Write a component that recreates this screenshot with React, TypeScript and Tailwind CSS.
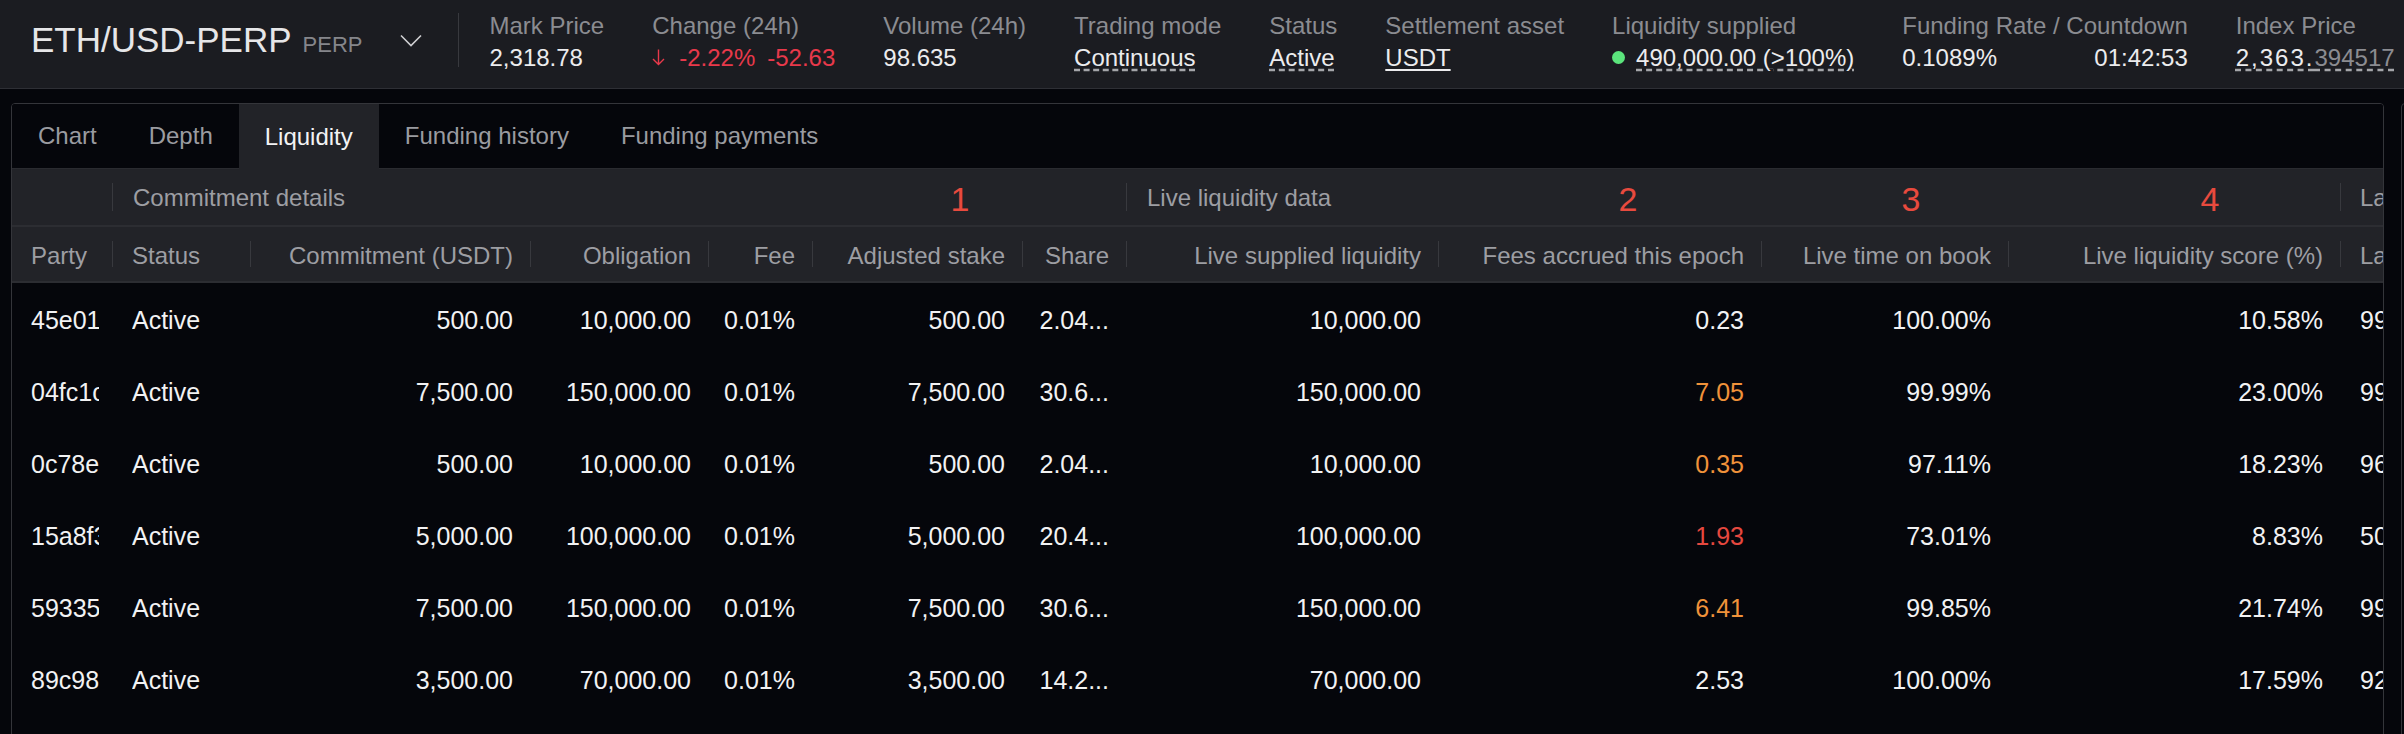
import clsx from "clsx";

type Tone = "white" | "orange" | "red";

type Row = {
  party: string;
  commitment: string;
  obligation: string;
  stake: string;
  share: string;
  supplied: string;
  fees: string;
  tone: Tone;
  time: string;
  score: string;
  last: string;
};

const rows: Row[] = [
  { party: "45e01b7c2a", commitment: "500.00", obligation: "10,000.00", stake: "500.00", share: "2.04...", supplied: "10,000.00", fees: "0.23", tone: "white", time: "100.00%", score: "10.58%", last: "99.12%" },
  { party: "04fc1c9e3d", commitment: "7,500.00", obligation: "150,000.00", stake: "7,500.00", share: "30.6...", supplied: "150,000.00", fees: "7.05", tone: "orange", time: "99.99%", score: "23.00%", last: "99.98%" },
  { party: "0c78e5a1f0", commitment: "500.00", obligation: "10,000.00", stake: "500.00", share: "2.04...", supplied: "10,000.00", fees: "0.35", tone: "orange", time: "97.11%", score: "18.23%", last: "96.40%" },
  { party: "15a8f3b6c1", commitment: "5,000.00", obligation: "100,000.00", stake: "5,000.00", share: "20.4...", supplied: "100,000.00", fees: "1.93", tone: "red", time: "73.01%", score: "8.83%", last: "50.22%" },
  { party: "593358d2e7", commitment: "7,500.00", obligation: "150,000.00", stake: "7,500.00", share: "30.6...", supplied: "150,000.00", fees: "6.41", tone: "orange", time: "99.85%", score: "21.74%", last: "99.71%" },
  { party: "89c98a4f16", commitment: "3,500.00", obligation: "70,000.00", stake: "3,500.00", share: "14.2...", supplied: "70,000.00", fees: "2.53", tone: "white", time: "100.00%", score: "17.59%", last: "92.08%" },
];

const columns: { label: string; right: boolean }[] = [
  { label: "Party", right: false },
  { label: "Status", right: false },
  { label: "Commitment (USDT)", right: true },
  { label: "Obligation", right: true },
  { label: "Fee", right: true },
  { label: "Adjusted stake", right: true },
  { label: "Share", right: true },
  { label: "Live supplied liquidity", right: true },
  { label: "Fees accrued this epoch", right: true },
  { label: "Live time on book", right: true },
  { label: "Live liquidity score (%)", right: true },
  { label: "Last epoch fraction of time on book", right: false },
];

const GRID =
  "grid grid-cols-[101px_138px_280px_178px_104px_210px_104px_312px_323px_247px_332px_240px]";

const toneClass: Record<Tone, string> = {
  white: "text-[#f2f2f3]",
  orange: "text-[#f0923a]",
  red: "text-[#e5483f]",
};

function Sep({ h }: { h: string }) {
  return <div className={clsx("w-px shrink-0 bg-[#38393e]", h)} />;
}

function Stat({ label, children }: { label: string; children: React.ReactNode }) {
  return (
    <div className="flex flex-col shrink-0">
      <div className="text-[24px] leading-[32px] text-[#8b8c91] whitespace-nowrap">{label}</div>
      <div className="text-[24px] leading-[32px] text-[#ececee] whitespace-nowrap">{children}</div>
    </div>
  );
}

function Header() {
  return (
    <header className="h-[89px] shrink-0 bg-[#1b1c21] border-b border-[#2e2f35] flex items-center pb-[8px] pl-[31px] overflow-hidden">
      <div className="flex items-baseline gap-[11px] shrink-0">
        <span className="text-[35px] leading-[40px] text-[#e6e6e8]">ETH/USD-PERP</span>
        <span className="text-[22px] text-[#85868b]">PERP</span>
      </div>
      <svg className="ml-[37px] shrink-0" width="22" height="13" viewBox="0 0 22 13" fill="none">
        <path d="M1 1.5L11 11.5L21 1.5" stroke="#cfcfd2" strokeWidth="1.6" />
      </svg>
      <div className="ml-[36px]">
        <Sep h="h-[54px]" />
      </div>
      <div className="ml-[31px] mt-[3px] flex gap-[48px]">
        <Stat label="Mark Price">2,318.78</Stat>
        <Stat label="Change (24h)">
          <span className="flex items-center text-[#e8394b]">
            <svg width="13" height="17" viewBox="0 0 13 17" fill="none" className="mr-[14px]">
              <path d="M6.5 0.5V15.5M1 10L6.5 15.5L12 10" stroke="#e8394b" strokeWidth="1.4" />
            </svg>
            <span>-2.22%</span>
            <span className="ml-[12px]">-52.63</span>
          </span>
        </Stat>
        <Stat label="Volume (24h)">98.635</Stat>
        <Stat label="Trading mode">
          <span className="underline decoration-dashed decoration-[#a5a6aa] underline-offset-4">Continuous</span>
        </Stat>
        <Stat label="Status">
          <span className="underline decoration-dashed decoration-[#a5a6aa] underline-offset-4">Active</span>
        </Stat>
        <Stat label="Settlement asset">
          <span className="underline decoration-[#ececee] decoration-2 underline-offset-[3px]">USDT</span>
        </Stat>
        <Stat label="Liquidity supplied">
          <span className="flex items-center">
            <span className="w-[13px] h-[13px] rounded-full bg-[#5be47c] mr-[11px]" />
            <span className="underline decoration-dashed decoration-[#a5a6aa] underline-offset-4">490,000.00 (&gt;100%)</span>
          </span>
        </Stat>
        <div className="flex flex-col shrink-0">
          <div className="text-[24px] leading-[32px] text-[#8b8c91] whitespace-nowrap">Funding Rate / Countdown</div>
          <div className="text-[24px] leading-[32px] text-[#ececee] flex justify-between">
            <span>0.1089%</span>
            <span>01:42:53</span>
          </div>
        </div>
        <Stat label="Index Price">
          <span className="underline decoration-dashed decoration-[#a5a6aa] underline-offset-4">
            <span className="tracking-[2px]">2,363.</span>
            <span className="text-[#8b8c91]">394517</span>
          </span>
        </Stat>
      </div>
    </header>
  );
}

const tabs = ["Chart", "Depth", "Liquidity", "Funding history", "Funding payments"];

function Tabs() {
  return (
    <div className="h-[65px] flex border-b border-[#2a2b30] bg-[#05060b]">
      {tabs.map((t) => (
        <div
          key={t}
          className={clsx(
            "px-[26px] flex items-center text-[24px] whitespace-nowrap",
            t === "Liquidity" ? "bg-[#222328] text-[#f3f3f4] -mb-px" : "text-[#9a9ba0]"
          )}
        >
          {t}
        </div>
      ))}
    </div>
  );
}

const marks = [
  { n: "1", cls: "left-[948px]" },
  { n: "2", cls: "left-[1616px]" },
  { n: "3", cls: "left-[1899px]" },
  { n: "4", cls: "left-[2198px]" },
];

function GroupHeader() {
  return (
    <div className="relative h-[58px] bg-[#222328] border-b-2 border-[#2c2d32] grid grid-cols-[101px_1014px_1214px_240px] text-[24px] text-[#9d9ea3]">
      <div className="flex items-center justify-end">
        <Sep h="h-[28px]" />
      </div>
      <div className="flex items-center">
        <div className="flex-1 pl-[20px] pt-[2px] whitespace-nowrap">Commitment details</div>
        <Sep h="h-[28px]" />
      </div>
      <div className="flex items-center">
        <div className="flex-1 pl-[20px] pt-[2px] whitespace-nowrap">Live liquidity data</div>
        <Sep h="h-[28px]" />
      </div>
      <div className="flex items-center pl-[19px] pt-[2px] whitespace-nowrap">Last epoch liquidity data</div>
      {marks.map((m) => (
        <span
          key={m.n}
          className={clsx(
            "absolute top-[30px] -translate-x-1/2 -translate-y-1/2 text-[34px] leading-none text-[#e84a3e]",
            m.cls
          )}
        >
          {m.n}
        </span>
      ))}
    </div>
  );
}

function ColumnHeader() {
  return (
    <div className={clsx(GRID, "h-[56px] bg-[#222328] border-b-2 border-[#2c2d32] text-[24px] text-[#9d9ea3]")}>
      {columns.map((c, i) => (
        <div key={c.label} className="flex items-center min-w-0">
          <div
            className={clsx(
              "flex-1 min-w-0 whitespace-nowrap overflow-hidden pt-[3px]",
              c.right ? "text-right pr-[17px]" : "pl-[19px]"
            )}
          >
            {c.label}
          </div>
          {i < columns.length - 1 && <Sep h="h-[26px]" />}
        </div>
      ))}
    </div>
  );
}

function DataRow({ r }: { r: Row }) {
  const cells: { v: string; right: boolean; cls?: string }[] = [
    { v: r.party, right: false, cls: "pr-[14px]" },
    { v: "Active", right: false },
    { v: r.commitment, right: true },
    { v: r.obligation, right: true },
    { v: "0.01%", right: true },
    { v: r.stake, right: true },
    { v: r.share, right: true },
    { v: r.supplied, right: true },
    { v: r.fees, right: true, cls: toneClass[r.tone] },
    { v: r.time, right: true },
    { v: r.score, right: true },
    { v: r.last, right: false },
  ];
  return (
    <div className={clsx(GRID, "h-[72px] text-[25px] text-[#f2f2f3]")}>
      {cells.map((c, i) => (
        <div
          key={i}
          className={clsx(
            "flex items-center min-w-0 pt-[3px]",
            c.right ? "justify-end pr-[18px]" : "pl-[19px]",
            c.cls
          )}
        >
          <span className="block min-w-0 overflow-hidden whitespace-nowrap">{c.v}</span>
        </div>
      ))}
    </div>
  );
}

export default function App() {
  return (
    <div className="w-full h-[734px] overflow-hidden bg-[#05060b] flex flex-col [font-family:'Liberation_Sans',Arial,sans-serif]">
      <Header />
      <div className="flex gap-[17px] pl-[11px] pt-[14px] overflow-hidden">
        <section className="w-[2373px] h-[660px] shrink-0 border border-[#34353a] rounded-[4px] overflow-hidden bg-[#05060b]">
          <Tabs />
          <GroupHeader />
          <ColumnHeader />
          {rows.map((r) => (
            <DataRow key={r.party} r={r} />
          ))}
        </section>
        <section className="w-[300px] h-[660px] shrink-0 border border-[#34353a] rounded-[4px] bg-[#05060b]" />
      </div>
    </div>
  );
}
